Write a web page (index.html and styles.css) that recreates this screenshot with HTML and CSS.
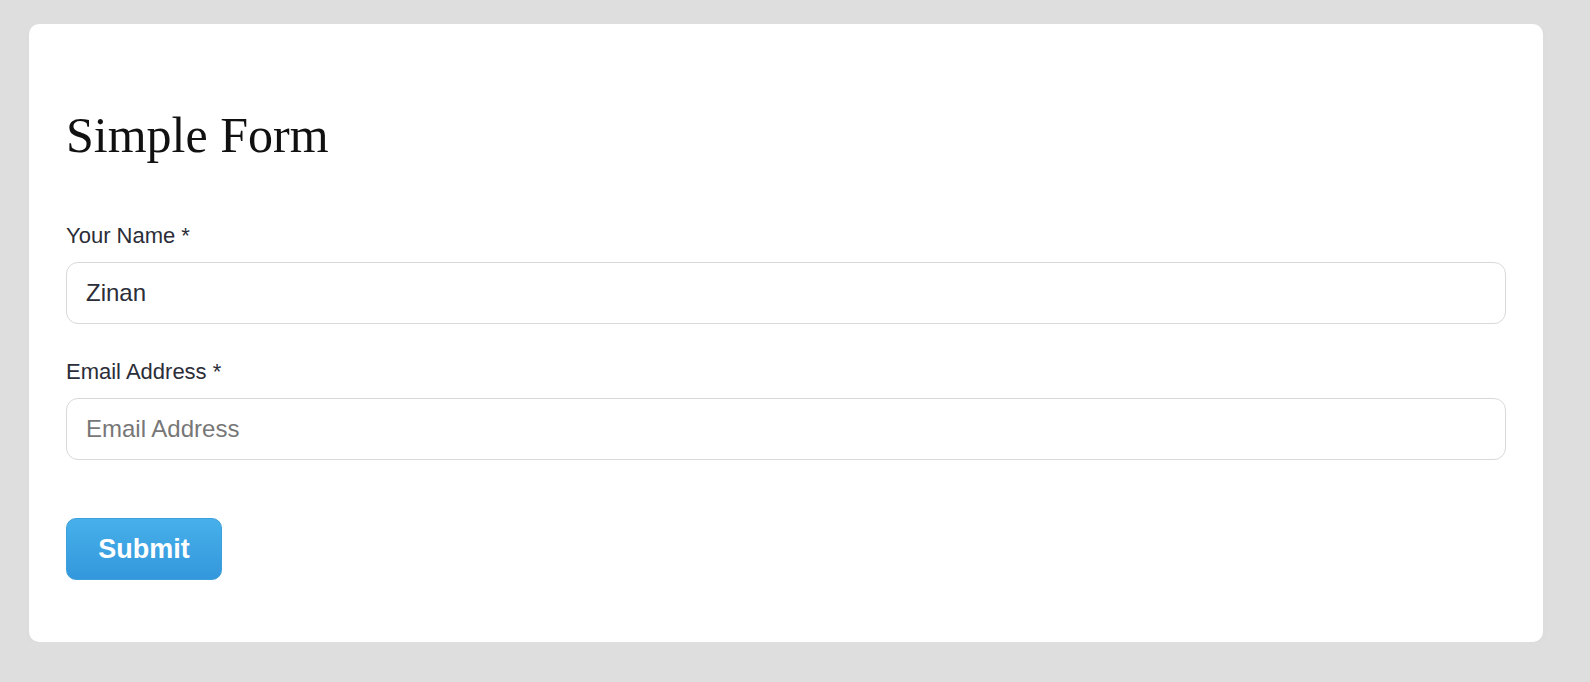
FILE: index.html
```html
<!DOCTYPE html>
<html lang="en">
<head>
<meta charset="utf-8">
<title>Simple Form</title>
<link rel="stylesheet" href="styles.css">
</head>
<body>
<main class="card">
  <h1 class="title">Simple Form</h1>
  <form class="form">
    <div class="field">
      <label class="label" for="name">Your Name *</label>
      <input class="input" id="name" type="text" value="Zinan" placeholder="Your Name">
    </div>
    <div class="field">
      <label class="label" for="email">Email Address *</label>
      <input class="input" id="email" type="email" placeholder="Email Address">
    </div>
    <button class="submit" type="button">Submit</button>
  </form>
</main>
</body>
</html>
```

FILE: styles.css
```css
html, body {
  margin: 0;
  padding: 0;
}
body {
  background: #dedede;
  padding: 24px 0 0 29px;
  font-family: "Liberation Sans", Arial, sans-serif;
}
.card {
  box-sizing: border-box;
  width: 1514px;
  background: #ffffff;
  border-radius: 10px;
  padding: 83px 37px 62px 37px;
  box-shadow: 0 3px 8px rgba(0, 0, 0, 0.02);
}
.title {
  margin: 0 0 60px 0;
  font-family: "Liberation Serif", "Times New Roman", serif;
  font-weight: normal;
  font-size: 50px;
  line-height: 56px;
  color: #111111;
}
.form {
  display: flex;
  flex-direction: column;
  align-items: flex-start;
}
.field {
  display: flex;
  flex-direction: column;
  align-self: stretch;
  margin-bottom: 35px;
}
.field + .field {
  margin-bottom: 58px;
}
.label {
  font-size: 22px;
  line-height: 26px;
  color: #2b2d38;
  margin-bottom: 13px;
}
.input {
  box-sizing: border-box;
  height: 62px;
  width: 100%;
  border: 1px solid #d9d9d9;
  border-radius: 12px;
  padding: 0 19px;
  font-family: "Liberation Sans", Arial, sans-serif;
  font-size: 24px;
  color: #2b2d38;
  background: #ffffff;
  outline: none;
}
.input::placeholder {
  color: #777777;
  opacity: 1;
}
.submit {
  box-sizing: border-box;
  height: 62px;
  width: 156px;
  padding: 0;
  border: 1px solid #3d9fdc;
  border-radius: 10px;
  background: linear-gradient(to bottom, #47b0ea, #3497dc);
  color: #ffffff;
  font-family: "Liberation Sans", Arial, sans-serif;
  font-weight: bold;
  font-size: 27px;
  cursor: pointer;
}
```
